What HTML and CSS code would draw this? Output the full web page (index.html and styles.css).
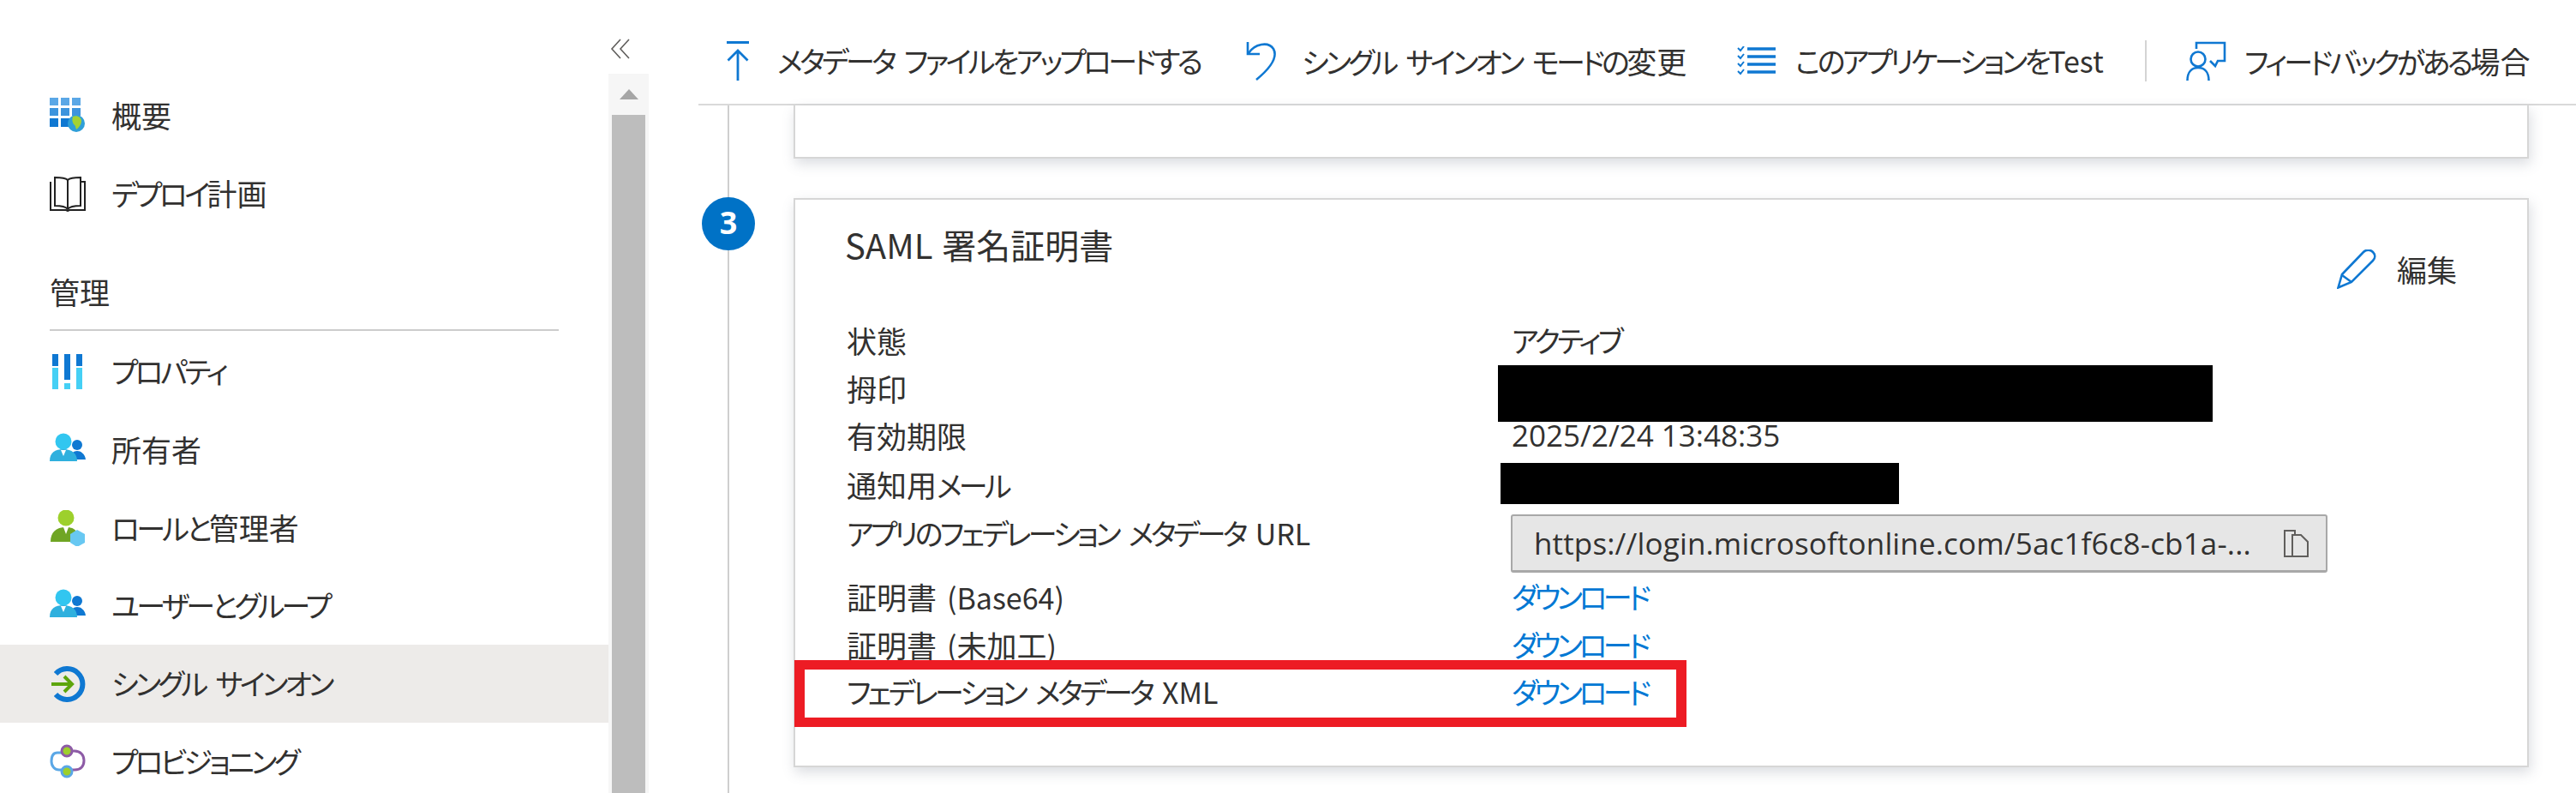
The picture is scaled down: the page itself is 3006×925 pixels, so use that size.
FILE: index.html
```html
<!DOCTYPE html>
<html lang="ja">
<head>
<meta charset="utf-8">
<title>シングル サインオン</title>
<link rel="stylesheet" href="styles.css">
</head>
<body>
<div class="page">
  <aside class="side">
    <div class="nav">
      <div class="collapse"><svg width="24" height="24" viewBox="0 0 24 24" fill="none" stroke="#605e5c" stroke-width="1.6"><path d="M12 1 2 12l10 11M22 1 12 12l10 11"/></svg></div>
      <div class="item"><svg class="ico" viewBox="0 0 42 42"><g fill="#3d94dd"><rect x="0" y="0" width="10" height="9" fill="#5aa7e6"/><rect x="13" y="0" width="10" height="9" fill="#5aa7e6"/><rect x="26" y="0" width="10" height="9" fill="#5aa7e6"/><rect x="0" y="12" width="10" height="9"/><rect x="13" y="12" width="10" height="9"/><rect x="26" y="12" width="10" height="9"/><rect x="0" y="24" width="10" height="10" fill="#0f78d2"/><rect x="13" y="24" width="10" height="10" fill="#0f78d2"/></g><circle cx="31" cy="30" r="10" fill="#2f9fd8"/><path d="M27 22c5-2 10 1 10 5 0 4-3 8-6 10-1-3-1-5-3-6-2-3-2-6-1-9z" fill="#a4d233"/></svg><span class="lb"><span class="kj">概要</span></span></div>
      <div class="item"><svg class="ico" viewBox="0 0 42 42" fill="none" stroke="#222" stroke-width="2"><path d="M1 7v33h18l2 1 2-1h18V7h-4"/><path d="M21 39V5c-3-3-10-3-15-3v33c5 0 12 0 15 4 3-4 10-4 15-4V2c-5 0-12 0-15 3"/></svg><span class="lb">デプロイ<span class="kj">計画</span></span></div>
      <div class="head">管理</div>
      <div class="item"><svg class="ico" viewBox="0 0 42 42"><path d="M3 0h7v14H3zM17 0h7v30h-7zM31 0h7v14h-7z" fill="#0f78d2"/><path d="M3 16h7v25H3zM31 16h7v25h-7zM17 34h7v7h-7z" fill="#45d0f5"/></svg><span class="lb">プロパティ</span></div>
      <div class="item"><svg class="ico" viewBox="0 0 42 42"><circle cx="32" cy="15" r="6" fill="#0f78d2"/><path d="M24 32c0-7 4-10 8-10s9 3 10 10z" fill="#0f78d2"/><circle cx="16" cy="11" r="9.5" fill="#32c6f0"/><path d="M0 34c0-10 6-14 16-14s16 5 16 14z" fill="#2fb0de"/><path d="M13 21h6l-3 7z" fill="#fff"/></svg><span class="lb"><span class="kj">所有者</span></span></div>
      <div class="item"><svg class="ico" viewBox="0 0 42 42"><circle cx="19" cy="9" r="9.5" fill="#9dd02c"/><path d="M1 37c0-11 6-17 18-17s14 6 14 17z" fill="#6fa524"/><path d="M16 20h6l-3 8z" fill="#fff"/><path d="M32 23l9 5v10l-9 5-8-5V28z" fill="#68c8f2"/></svg><span class="lb">ロールと<span class="kj">管理者</span></span></div>
      <div class="item"><svg class="ico" viewBox="0 0 42 42"><circle cx="32" cy="15" r="6" fill="#0f78d2"/><path d="M24 32c0-7 4-10 8-10s9 3 10 10z" fill="#0f78d2"/><circle cx="16" cy="11" r="9.5" fill="#32c6f0"/><path d="M0 34c0-10 6-14 16-14s16 5 16 14z" fill="#2fb0de"/><path d="M13 21h6l-3 7z" fill="#fff"/></svg><span class="lb">ユーザーとグループ</span></div>
      <div class="item sel"><svg class="ico" viewBox="0 0 42 42"><path d="M7 9A18 18 0 1 1 7 33" fill="none" stroke="#0f78d2" stroke-width="6"/><path d="M2 21h23M17 12l9 9-9 9" fill="none" stroke="#5ea50d" stroke-width="4"/></svg><span class="lb">シングル サインオン</span></div>
      <div class="item"><svg class="ico" viewBox="0 0 42 42" fill="none" stroke-width="3"><path d="M22 8h7c7 0 11 5 11 11s-3 11-11 11h-3" stroke="#8d5ba6"/><path d="M14 10H9C4 10 2 14 2 20s4 10 9 10h4" stroke="#5aa7e6"/><circle cx="20" cy="8" r="6" stroke="#8d5ba6" fill="#9dcf2c"/><circle cx="20" cy="32" r="6" stroke="#5aa7e6" fill="#9dcf2c"/></svg><span class="lb">プロビジョニング</span></div>
    </div>
    <div class="scroll">
      <div class="up"><i class="tri"></i></div>
      <div class="thumb"></div>
    </div>
  </aside>
  <main class="main">
    <div class="bar">
      <div class="cmd c1"><svg class="bi" width="28" height="46" viewBox="0 0 28 46" fill="none" stroke="#0f78d2" stroke-width="2.8"><path d="M1 1.5h26M14 46V11M2.5 22.5 14 11l11.500 11.500"/></svg><span class="lb">メタデータ ファイルをアップロードする</span></div>
      <div class="cmd c2"><svg class="bi" width="36" height="46" viewBox="0 0 36 46" fill="none" stroke="#0f78d2" stroke-width="2.6"><path d="M2 1v14h14"/><path d="M3 14C10 3 26 0 32 9c5 9-3 22-20 36"/></svg><span class="lb">シングル サインオン モードの<span class="kj">変更</span></span></div>
      <div class="cmd c3"><svg class="bi" width="45" height="34" viewBox="0 0 45 34" fill="none" stroke="#0f78d2" stroke-width="3.4"><path d="M12 3h33M12 12h33M12 21h33M12 30h33"/><path stroke-width="2" d="M1 2l3 3 4-5M1 11l3 3 4-5M1 20l3 3 4-5M1 29l3 3 4-5"/></svg><span class="lb">このアプリケーションを<span class="lt">Test</span></span></div>
      <div class="sep"></div>
      <div class="cmd c4"><svg class="bi" width="48" height="46" viewBox="0 0 48 46" fill="none" stroke="#0f78d2" stroke-width="2.6"><path d="M13 9V2h33v21H38l-3 6-6-6"/><circle cx="15" cy="21" r="8.500"/><path d="M2.500 46c0-10 5-15 12.500-15s12.500 5 12.500 15"/></svg><span class="lb">フィードバックがある<span class="kj">場合</span></span></div>
    </div>
    <div class="body">
      <div class="rail"></div>
      <div class="badge">3</div>
      <div class="card top"></div>
      <section class="card cert">
        <h2 class="title">SAML <span class="kj">署名証明書</span></h2>
        <div class="edit"><svg width="46" height="46" viewBox="0 0 46 46" fill="none" stroke="#0f78d2" stroke-width="2.6"><path d="M1.500 44.500 6 29 31 3c3-3 8-3 11 0s3 7 0 10L17 38z"/><path d="M6 30l11 8"/></svg><span>編集</span></div>
        <div class="rows">
          <div class="row r1"><span class="k kj">状態</span><span class="v">アクティブ</span></div>
          <div class="row r2"><span class="k kj">拇印</span><span class="mask m1"></span></div>
          <div class="row r3"><span class="k kj">有効期限</span><span class="v date">2025/2/24 13:48:35</span></div>
          <div class="row r4"><span class="k"><span class="kj">通知用</span>メール</span><span class="mask m2"></span></div>
          <div class="row r5"><span class="k">アプリのフェデレーション メタデータ <span class="lt">URL</span></span><div class="copy"><span>https://login.microsoftonline.com/5ac1f6c8-cb1a-...</span><svg width="30" height="33" viewBox="0 0 30 33" fill="none" stroke="#605e5c" stroke-width="2"><path d="M10 32H1V2h12v5"/><path d="M10 7h10l8 8v17H10z"/></svg></div></div>
          <div class="row r6"><span class="k"><span class="kj">証明書</span> <span class="lt">(Base64)</span></span><a class="v link">ダウンロード</a></div>
          <div class="row r7"><span class="k"><span class="kj">証明書</span> <span class="lt">(</span><span class="kj">未加工</span><span class="lt">)</span></span><a class="v link">ダウンロード</a></div>
          <div class="row r8"><span class="k">フェデレーション メタデータ <span class="lt">XML</span></span><a class="v link">ダウンロード</a></div>
        </div>
        <div class="mark"></div>
      </section>
    </div>
  </main>
</div>
</body>
</html>
```
FILE: styles.css
```css
* { box-sizing: border-box; }
html, body { margin: 0; padding: 0; background: #fff; }
body {
  font-family: "Noto Sans CJK JP", "Open Sans", sans-serif;
  color: #323130;
  font-feature-settings: "palt";
  overflow: hidden;
}
.page { display: flex; width: 3006px; height: 925px; overflow: hidden; }
.side { width: 815px; flex: none; display: flex; position: relative; }
.nav { width: 710px; flex: none; padding-top: 89px; }
.collapse { position: absolute; left: 712px; top: 45px; line-height: 0; }
.item { height: 91px; display: flex; align-items: center; gap: 30px; padding-left: 58px; white-space: pre; }
.item.sel { background: #edebe9; }
.item .lb { margin-bottom: 3px; }
.ico { width: 42px; height: 42px; flex: none; }
.lb, .rows { font-size: 34px; letter-spacing: -3.7px; word-spacing: 8px; white-space: pre; }
.kj { font-size: 35px; letter-spacing: 0; word-spacing: 0; }
.lt { letter-spacing: 0; }
.head { height: 115px; margin: 0 0 2px 58px; width: 594px; padding-top: 44px; font-size: 35px; line-height: 50px; border-bottom: 2px solid #ccc; }
.scroll { width: 47px; height: 839px; margin-top: 86px; background: #f6f6f6; display: flex; flex-direction: column; align-items: center; flex: none; }
.up { height: 48px; display: flex; align-items: center; justify-content: center; }
.tri { width: 0; height: 0; border-left: 11px solid transparent; border-right: 11px solid transparent; border-bottom: 12px solid #a6a6a6; }
.thumb { width: 39px; flex: 1; background: #bdbdbd; }
.main { flex: 1; min-width: 0; display: flex; flex-direction: column; }
.bar { height: 123px; flex: none; border-bottom: 2px solid #d9d9d9; display: flex; align-items: center; padding-top: 21px; }
.cmd { display: flex; align-items: center; flex: none; }
.cmd .lb { line-height: 46px; flex: none; }
.bi { flex: none; }
.c1 { margin-left: 32px; gap: 32px; }
.c1 .lb { width: 496px; }
.c2 { margin-left: 51px; gap: 29px; }
.c2 .lb { width: 458px; }
.c3 { margin-left: 50px; gap: 23px; }
.c3 .lb { width: 360px; }
.sep { width: 2px; height: 48px; background: #d4d4d4; margin-left: 48px; }
.c4 { margin-left: 45px; gap: 21px; }
.body { position: relative; flex: 1; padding-left: 111px; padding-right: 55px; }
.rail { position: absolute; left: 34px; top: 0; bottom: 0; width: 2px; background: #cfcfcf; }
.badge { position: absolute; left: 4px; top: 107px; width: 62px; height: 62px; border-radius: 50%; background: #0072c6; color: #fff; font: 700 36px/60px "Open Sans", sans-serif; text-align: center; }
.card { background: #fff; border: 2px solid #d6d6d6; box-shadow: 2px 6px 14px rgba(90,100,120,.22); }
.card.top { height: 62px; border-top: 0; }
.cert { position: relative; height: 664px; margin-top: 46px; }
.title { position: absolute; left: 58px; top: 24px; margin: 0; font-size: 40px; font-weight: 400; line-height: 56px; letter-spacing: 0; word-spacing: 2px; white-space: pre; }
.title .kj { font-size: 40px; }
.edit { position: absolute; left: 1799px; top: 58px; display: flex; align-items: center; gap: 24px; font-size: 35px; line-height: 46px; }
.rows { position: absolute; left: 60px; top: 0; right: 0; }
.row { position: absolute; left: 0; right: 0; height: 46px; line-height: 46px; }
.k { position: absolute; left: 0; top: 0; }
.v { position: absolute; left: 776px; top: 0; }
.r1 { top: 141px; } .r2 { top: 197px; } .r3 { top: 252px; } .r4 { top: 309px; } .r5 { top: 366px; } .r6 { top: 440px; } .r7 { top: 496px; } .r8 { top: 551px; }
.date { font-family: "Open Sans", sans-serif; font-size: 35px; letter-spacing: 0; word-spacing: 0; }
.mask { position: absolute; background: #000; }
.m1 { left: 760px; top: -4px; width: 834px; height: 66px; }
.m2 { left: 763px; top: -2px; width: 465px; height: 48px; }
.link { color: #0078d4; letter-spacing: -4.500px; }
.copy { position: absolute; left: 775px; top: 1px; width: 953px; height: 68px; background: #e6e6e6; border: 2px solid #a8a8a8; border-bottom-width: 3px; border-radius: 3px; display: flex; align-items: center; justify-content: space-between; padding: 0 19px 0 25px; font: 35px/1 "Open Sans", sans-serif; letter-spacing: .15px; word-spacing: 0; }
.mark { position: absolute; left: -1px; top: 537px; width: 1041px; height: 78px; border: solid #ed1c24; border-width: 11px 12px; }
```
